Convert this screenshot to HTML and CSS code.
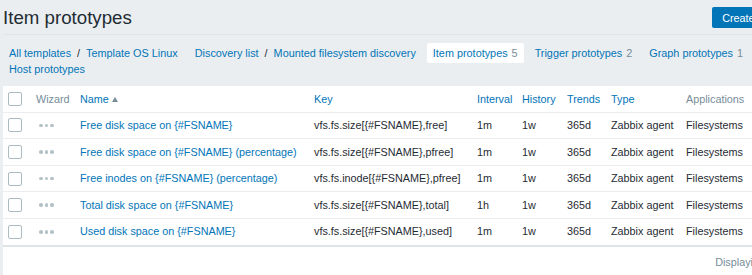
FILE: index.html
```html
<!DOCTYPE html>
<html>
  <head>
    <title>Item prototypes</title>
    <link rel="stylesheet" href="styles.css">
  </head>
  <body>
  <div class="page">
    <div class="header">
      <h1 class="header-title">Item prototypes</h1>
      <button class="btn-create" type="button">Create item prototype</button>
    </div>

    <ul class="breadcrumbs">
      <li><a href="#">All templates</a><span class="sep">/</span><a href="#">Template OS Linux</a></li>
      <li><a href="#">Discovery list</a><span class="sep">/</span><a href="#">Mounted filesystem discovery</a></li>
      <li class="selected"><a href="#">Item prototypes</a><span class="count">5</span></li>
      <li><a href="#">Trigger prototypes</a><span class="count">2</span></li>
      <li><a href="#">Graph prototypes</a><span class="count">1</span></li>
      <li><a href="#">Host prototypes</a></li>
    </ul>

    <div class="list">
      <table class="list-table">
        <colgroup>
          <col class="c-check">
          <col class="c-wizard">
          <col class="c-name">
          <col class="c-key">
          <col class="c-interval">
          <col class="c-history">
          <col class="c-trends">
          <col class="c-type">
          <col class="c-apps">
        </colgroup>
        <thead>
          <tr>
            <th><span class="checkbox"></span></th>
            <th class="muted">Wizard</th>
            <th><a href="#">Name</a><span class="arrow-up"></span></th>
            <th><a href="#">Key</a></th>
            <th><a href="#">Interval</a></th>
            <th><a href="#">History</a></th>
            <th><a href="#">Trends</a></th>
            <th><a href="#">Type</a></th>
            <th class="muted">Applications</th>
          </tr>
        </thead>
        <tbody>
          <tr>
            <td><span class="checkbox"></span></td>
            <td><span class="wizard"><i></i><i></i><i></i></span></td>
            <td><a href="#">Free disk space on {#FSNAME}</a></td>
            <td>vfs.fs.size[{#FSNAME},free]</td>
            <td>1m</td>
            <td>1w</td>
            <td>365d</td>
            <td>Zabbix agent</td>
            <td>Filesystems</td>
          </tr>
          <tr>
            <td><span class="checkbox"></span></td>
            <td><span class="wizard"><i></i><i></i><i></i></span></td>
            <td><a href="#">Free disk space on {#FSNAME} (percentage)</a></td>
            <td>vfs.fs.size[{#FSNAME},pfree]</td>
            <td>1m</td>
            <td>1w</td>
            <td>365d</td>
            <td>Zabbix agent</td>
            <td>Filesystems</td>
          </tr>
          <tr>
            <td><span class="checkbox"></span></td>
            <td><span class="wizard"><i></i><i></i><i></i></span></td>
            <td><a href="#">Free inodes on {#FSNAME} (percentage)</a></td>
            <td>vfs.fs.inode[{#FSNAME},pfree]</td>
            <td>1m</td>
            <td>1w</td>
            <td>365d</td>
            <td>Zabbix agent</td>
            <td>Filesystems</td>
          </tr>
          <tr>
            <td><span class="checkbox"></span></td>
            <td><span class="wizard"><i></i><i></i><i></i></span></td>
            <td><a href="#">Total disk space on {#FSNAME}</a></td>
            <td>vfs.fs.size[{#FSNAME},total]</td>
            <td>1h</td>
            <td>1w</td>
            <td>365d</td>
            <td>Zabbix agent</td>
            <td>Filesystems</td>
          </tr>
          <tr>
            <td><span class="checkbox"></span></td>
            <td><span class="wizard"><i></i><i></i><i></i></span></td>
            <td><a href="#">Used disk space on {#FSNAME}</a></td>
            <td>vfs.fs.size[{#FSNAME},used]</td>
            <td>1m</td>
            <td>1w</td>
            <td>365d</td>
            <td>Zabbix agent</td>
            <td>Filesystems</td>
          </tr>
        </tbody>
      </table>
      <div class="paging">Displaying 5 of 5 found</div>
    </div>
  </div>
  </body>
</html>
```

FILE: styles.css
```css
html, body {
    margin: 0;
    padding: 0;
    background-color: #ebeef0;
    overflow: hidden;
}

body {
    font-family: "Liberation Sans", Arial, sans-serif;
    font-size: 10.8px;
    color: #1f2c33;
}

a {
    color: #0275b8;
    text-decoration: none;
}

.page {
    width: 833px;
    padding: 0 0 0 3px;
}

/* page header */
.header {
    display: flex;
    justify-content: space-between;
    align-items: center;
    height: 35px;
    border-bottom: 1px solid #dfe4e7;
    box-sizing: border-box;
}

.header-title {
    margin: 0;
    font-size: 18.7px;
    font-weight: normal;
    line-height: 21px;
}

.btn-create {
    height: 21px;
    padding: 0 10px;
    border: 0;
    border-radius: 2px;
    background-color: #0275b8;
    color: #fff;
    font-family: inherit;
    font-size: 10.8px;
    margin-top: 1px;
}

/* breadcrumbs / tabs */
.breadcrumbs {
    display: flex;
    flex-wrap: wrap;
    list-style: none;
    margin: 10px 0 9px 0;
    padding: 0;
    column-gap: 5px;
    line-height: 16px;
    font-size: 10.85px;
}

.breadcrumbs li {
    padding: 0 6px;
    border-radius: 2px;
}

.breadcrumbs .sep {
    color: #1f2c33;
    margin: 0 6px;
}

.breadcrumbs .count {
    color: #768d99;
    margin-left: 4px;
}

.breadcrumbs .selected {
    background-color: #fff;
    padding: 2px 6px;
    margin: -2px 0;
}

/* list */
.list {
    background-color: #fff;
    padding-bottom: 40px;
}

.list-table {
    border-collapse: collapse;
    table-layout: fixed;
    width: 100%;
}

.c-check { width: 28px; }
.c-wizard { width: 44px; }
.c-name { width: 234px; }
.c-key { width: 163px; }
.c-interval { width: 45px; }
.c-history { width: 45px; }
.c-trends { width: 44px; }
.c-type { width: 75px; }

.list-table th,
.list-table td {
    padding: 5.5px 5px;
    line-height: 14.6px;
    text-align: left;
    white-space: nowrap;
    vertical-align: middle;
    border-bottom: 1px solid #ebeef0;
}

.list-table th {
    font-weight: normal;
}

.list-table tbody tr:last-child td {
    border-bottom: 2px solid #dfe4e7;
}

.muted {
    color: #768d99;
}

.checkbox {
    display: block;
    width: 12px;
    height: 12px;
    border: 1px solid #acbbc2;
    border-radius: 2px;
    background-color: #fff;
}

.arrow-up {
    display: inline-block;
    width: 0;
    height: 0;
    margin-left: 3px;
    border-left: 3px solid transparent;
    border-right: 3px solid transparent;
    border-bottom: 5px solid #768d99;
    vertical-align: 1px;
}

.wizard {
    display: flex;
    gap: 2px;
    padding-left: 3px;
}

.wizard i {
    display: block;
    width: 3.5px;
    height: 3.5px;
    border-radius: 50%;
    background-color: #b4c2c8;
}

.paging {
    text-align: right;
    color: #768d99;
    padding: 9px 11px 0 0;
}
```
